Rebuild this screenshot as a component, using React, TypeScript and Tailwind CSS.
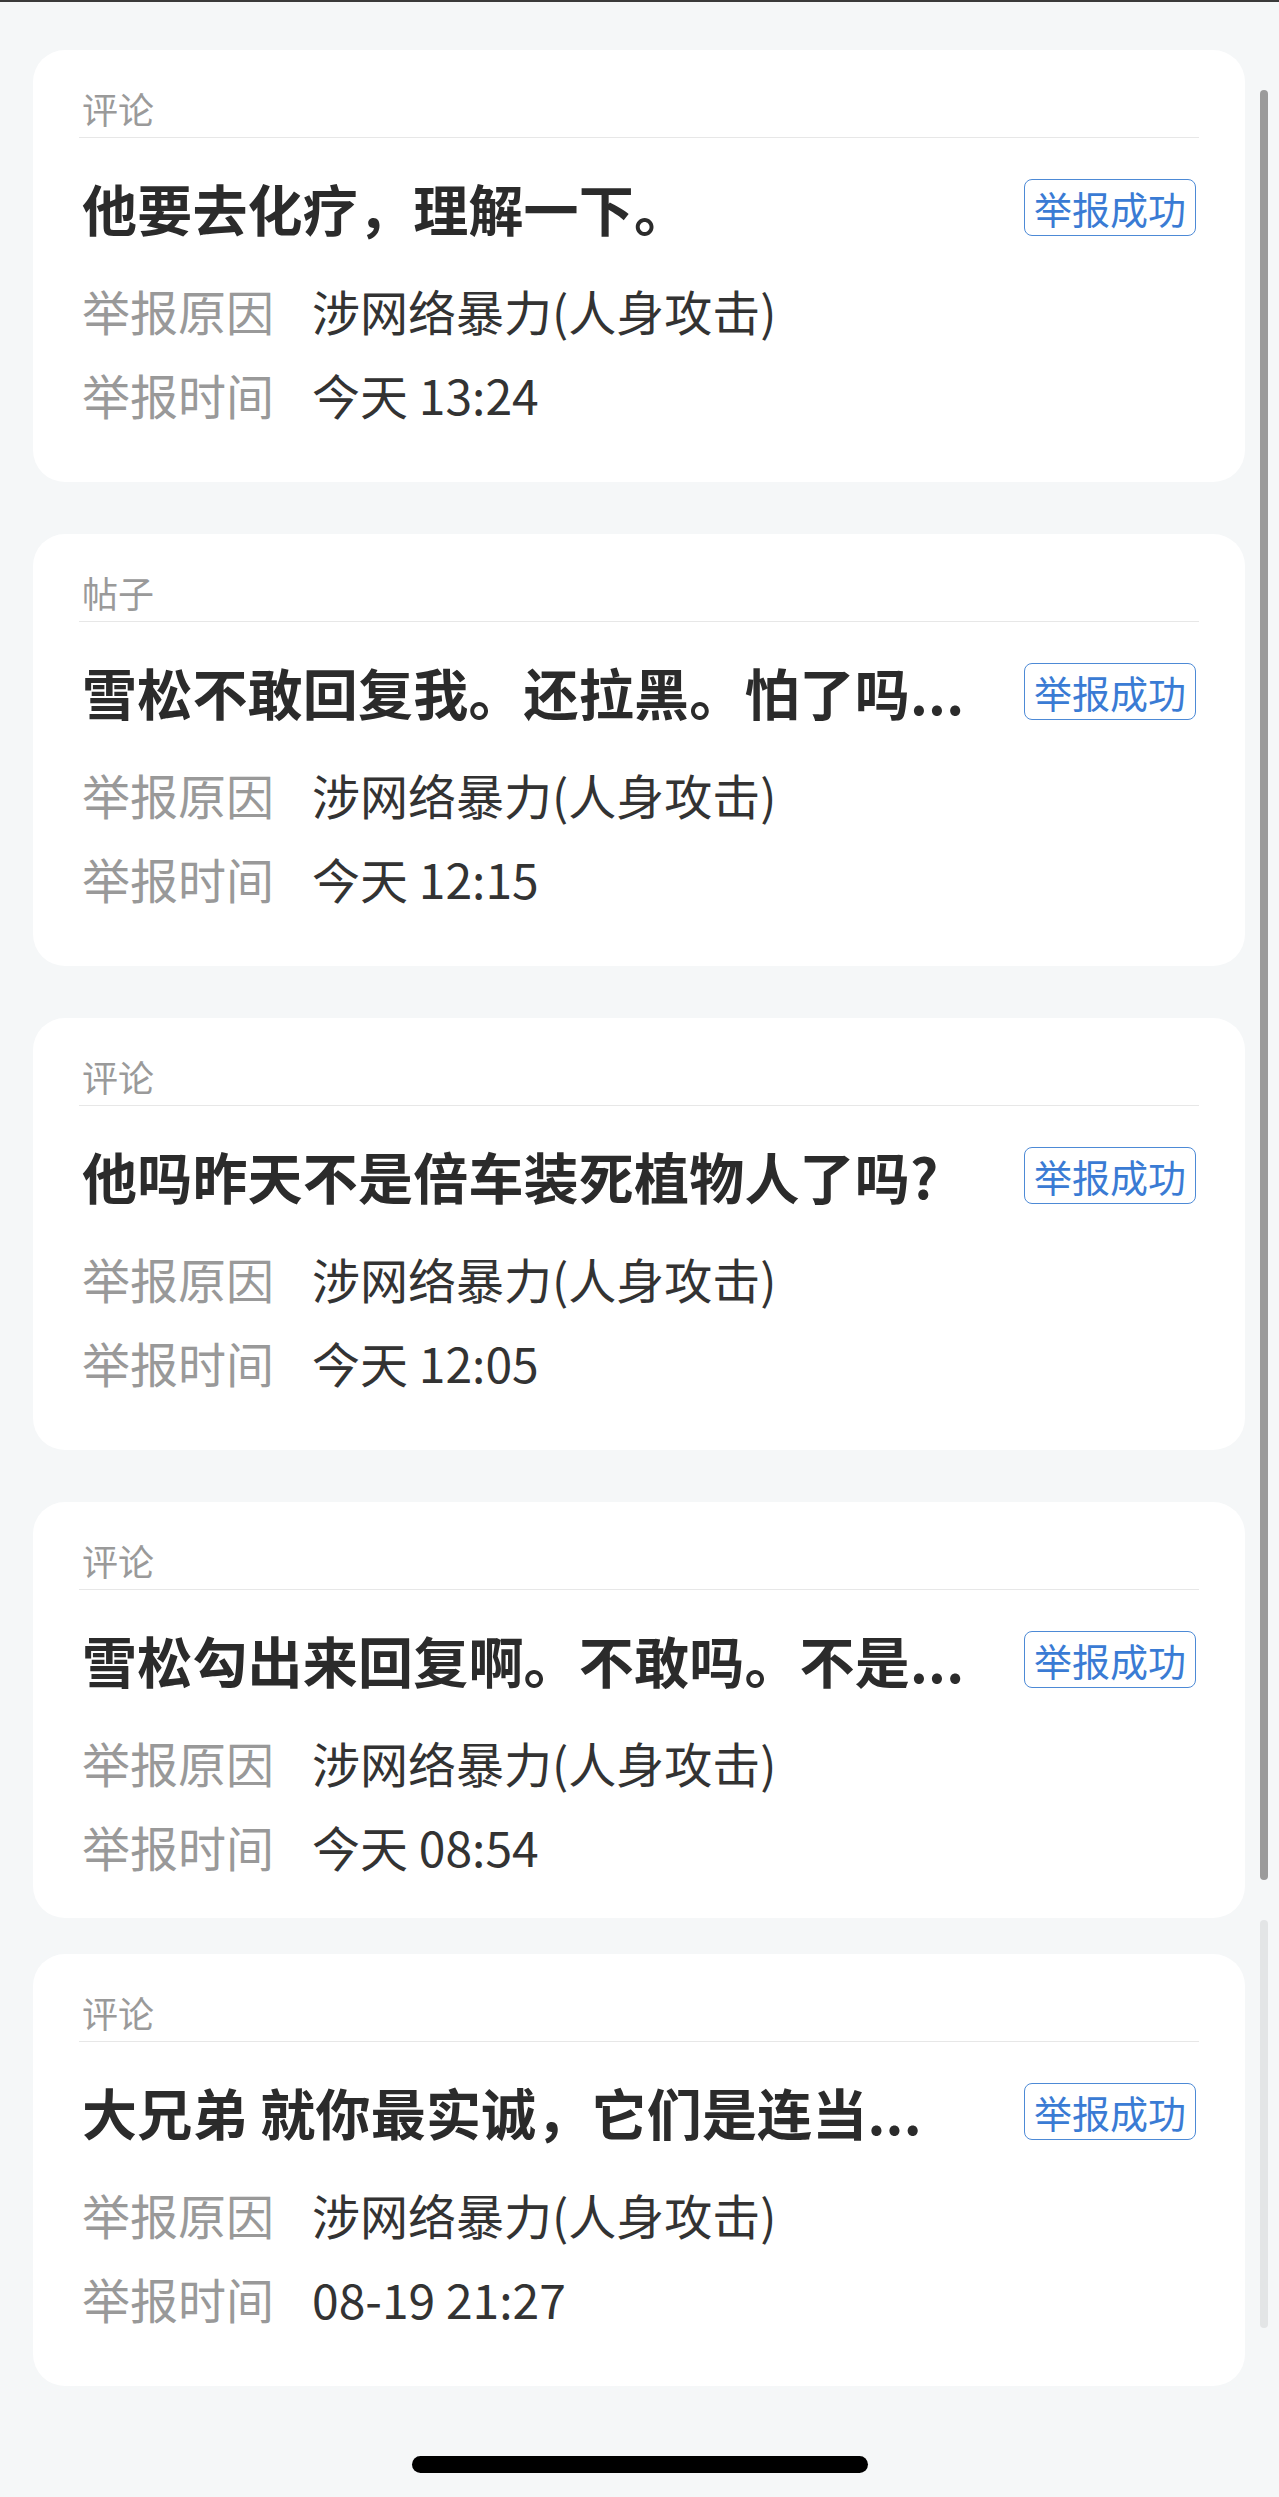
const reports = [
  { type: "评论", title: "他要去化疗，理解一下。", time: "今天 13:24" },
  { type: "帖子", title: "雪松不敢回复我。还拉黑。怕了吗...", time: "今天 12:15" },
  { type: "评论", title: "他吗昨天不是倍车装死植物人了吗?", time: "今天 12:05" },
  { type: "评论", title: "雪松勾出来回复啊。不敢吗。不是...", time: "今天 08:54" },
  { type: "评论", title: "大兄弟 就你最实诚，它们是连当...", time: "08-19 21:27" },
];

function ReportCard({ type, title, time, short }: { type: string; title: string; time: string; short?: boolean }) {
  return (
    <div className={`rounded-[32px] bg-white px-[46px] pt-[34px] ${short ? "pb-[30px]" : "pb-[46px]"}`}>
      <div className="border-b border-[#e7e7e7] pb-[5px] pl-[3px] text-[36px] leading-[48px] text-[#9a9a9a]">{type}</div>
      <div className="mt-[39px] flex h-[60px] items-center justify-between gap-6 pl-[3px]">
        <p className="min-w-0 flex-1 whitespace-nowrap text-[55px] font-bold leading-[64px] tracking-[0.2px] text-[#2b2b2b]">
          {title}
        </p>
        <span className="mr-[3px] shrink-0 rounded-[8px] border-[1.5px] border-[#4d8ad6] px-[9px] text-[38px] leading-[55px] text-[#3a7bd4]">
          举报成功
        </span>
      </div>
      <div className="mt-[31px] pl-[3px] text-[48px] leading-[84px]">
        <div className="flex gap-[38px]">
          <span className="text-[#999999]">举报原因</span>
          <span className="text-[#333333]">涉网络暴力(人身攻击)</span>
        </div>
        <div className="flex gap-[38px]">
          <span className="text-[#999999]">举报时间</span>
          <span className="text-[#333333]">{time}</span>
        </div>
      </div>
    </div>
  );
}

export default function App() {
  return (
    <div className="relative min-h-[2497px] w-[1279px] overflow-hidden bg-[#f5f7f8] font-['Noto_Sans_CJK_SC','Noto_Sans',sans-serif]">
      <div className="h-[2px] bg-[#3a3a3a]" />
      <div className="flex flex-col pl-[33px] pr-[34px] pt-[48px]">
        {reports.map((r, i) => (
          <div key={i} className={i === 0 ? "" : i === 4 ? "mt-[36px]" : "mt-[52px]"}>
            <ReportCard {...r} short={i === 3} />
          </div>
        ))}
      </div>
      <div className="mt-[70px] flex justify-center pb-[23px]">
        <div className="h-[17px] w-[456px] rounded-full bg-black" />
      </div>

      {/* scroll indicators */}
      <div className="absolute left-[1260px] top-[90px] h-[1790px] w-[8px] rounded-full bg-[#9b9b9b]" />
      <div className="absolute left-[1260px] top-[1920px] h-[408px] w-[8px] rounded-full bg-[#e3e5e6]" />
    </div>
  );
}
